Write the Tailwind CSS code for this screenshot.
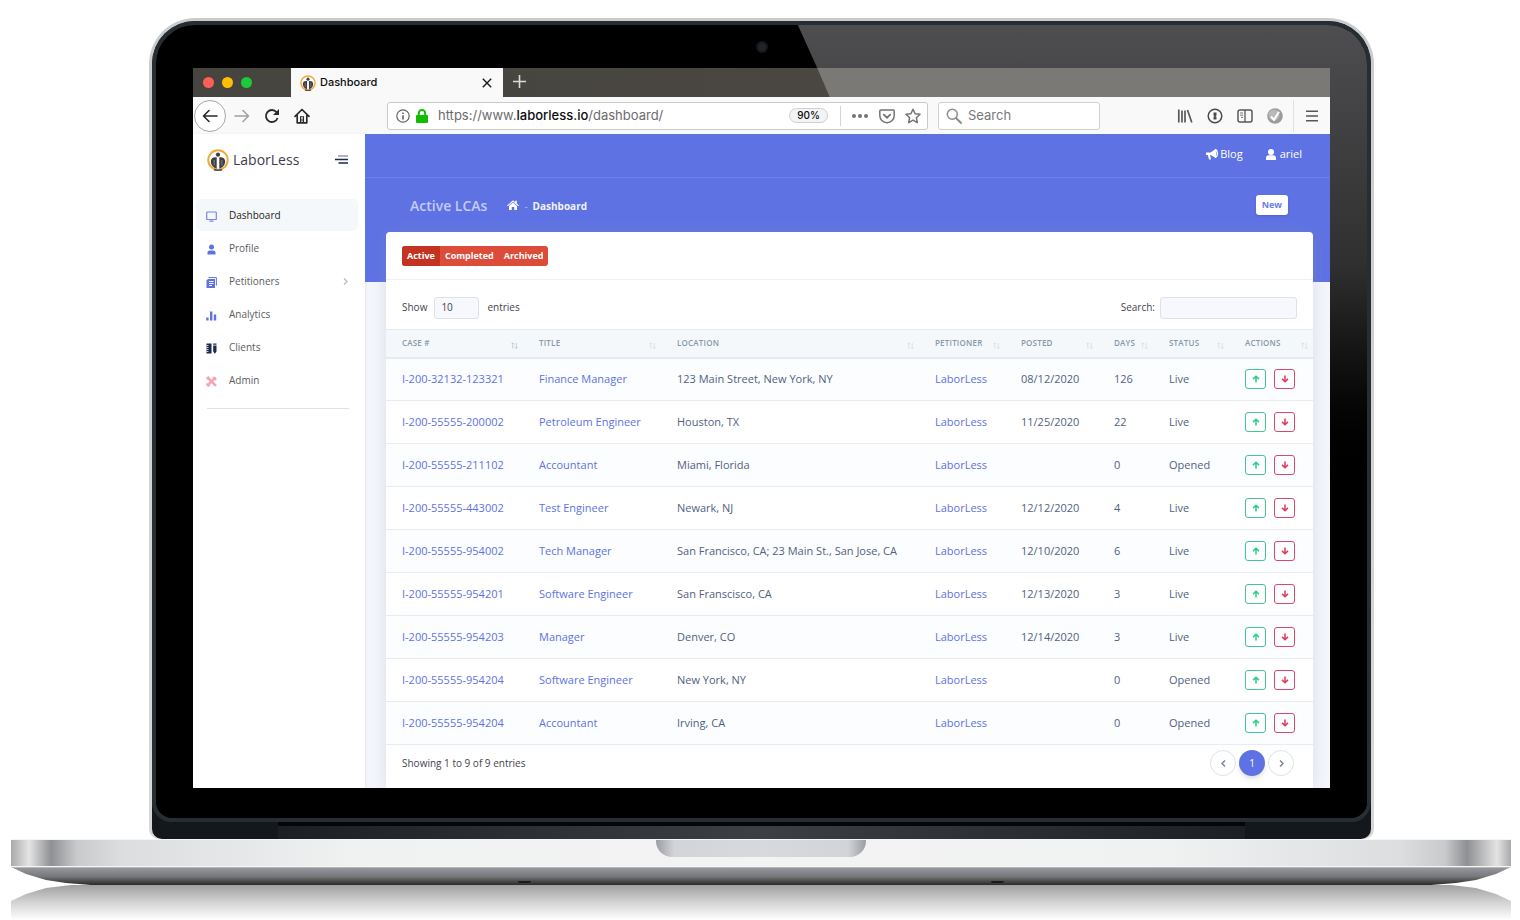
<!DOCTYPE html>
<html lang="en">
<head>
    <meta charset="UTF-8">
    <meta name="viewport" content="width=device-width, initial-scale=1.0">
    <title>LaborLess - Dashboard</title>
    <script src="https://cdn.jsdelivr.net/npm/@tailwindcss/browser@4"></script>
</head>
<body class="bg-white font-['Open_Sans','Liberation_Sans',sans-serif] overflow-x-hidden">

    <!-- Shared icons -->
    <svg class="hidden">
        <symbol id="logo" viewBox="0 0 24 24">
            <circle cx="12" cy="12" r="10.6" fill="#fff" stroke="#f2a93b" stroke-width="2.2"/>
            <circle cx="12" cy="6.2" r="2.3" fill="#3f3f42"/>
            <path d="M10.600 9v12.600C6.500 20.500 4 17 4.200 13.200 4.400 10 6.800 8.400 10.600 9zM13.400 9v12.600c4.100-1.100 6.600-4.600 6.400-8.400C19.600 10 17.200 8.400 13.400 9z" fill="#3f3f42"/>
            <path d="M7.800 12v6M16.200 12v6" stroke="#8b8b8d" stroke-width="1"/>
            <path d="M7.500 22.300c3 1.300 6 1.300 9 0" fill="none" stroke="#55534f" stroke-width="1.800"/>
        </symbol>
        <symbol id="arrow-up" viewBox="0 0 10 10">
            <path d="M5 9.500V1.800M1.300 5.200 5 1.500l3.700 3.700" fill="none" stroke="currentColor" stroke-width="1.900"/>
        </symbol>
        <symbol id="arrow-down" viewBox="0 0 10 10">
            <path d="M5 .5v7.700M1.300 4.800 5 8.500l3.700-3.700" fill="none" stroke="currentColor" stroke-width="1.900"/>
        </symbol>
        <symbol id="sort" viewBox="0 0 8 8">
            <path d="M2 7.500V1M.5 2.500 2 1l1.500 1.500M6 1v6.500M4.500 6 6 7.500 7.500 6" fill="none" stroke="currentColor" stroke-width=".7"/>
        </symbol>
    </svg>

    <div class="pt-[18px]">

        <!-- Laptop lid -->
        <div class="ml-[149px] mr-[146px] rounded-t-[46px] rounded-b-[10px] bg-linear-to-b from-[#c9cbcd] to-[#d6d7d9] px-[3px] pt-[3px]">
            <div class="rounded-t-[43px] rounded-b-[10px] bg-[#14181c] overflow-hidden">
                <div class="relative rounded-t-[43px] rounded-b-[20px] border-4 border-[#262e34] bg-black px-[37px] pt-[43px] pb-[30px] overflow-hidden">

                    <!-- Glare and camera -->
                    <div class="absolute inset-0 bg-linear-to-b from-[#4e4e50] via-[#303031] via-30% to-black to-60% [clip-path:polygon(53%_0,100%_0,100%_100%,80%_100%,54.6%_43px)]"></div>
                    <div class="absolute left-1/2 top-4 size-3 -translate-x-1/2 rounded-full border-2 border-[#15181b] bg-[#1f2428]"></div>

                    <!-- Screen -->
                    <div class="relative overflow-hidden bg-white">

                        <!-- Tabs -->
                        <div class="relative flex h-[29px] bg-linear-to-r from-[#45443f] to-[#4f4a46] font-[Inter,sans-serif]">
                            <div class="absolute inset-0 bg-[#7a7975] [clip-path:polygon(54.9%_0,100%_0,100%_100%,56%_100%)]"></div>
                            <div class="flex w-[98px] items-center gap-2 pl-[10px] pb-px">
                                <span class="size-[11px] rounded-full bg-[#ff5f57]"></span>
                                <span class="size-[11px] rounded-full bg-[#ffbd06]"></span>
                                <span class="size-[11px] rounded-full bg-[#1bcb38]"></span>
                            </div>
                            <div class="flex w-[212px] items-center bg-[#f9f9fa] pl-[9px] pr-[11px]">
                                <svg class="size-4"><use href="#logo"/></svg>
                                <span class="ml-1 text-[11px] font-medium text-[#0c0c0d]">Dashboard</span>
                                <button aria-label="Close tab" class="ml-auto">
                                    <svg class="size-[10px]" viewBox="0 0 10 10"><path d="M.8.800l8.400 8.400M9.200.8.800 9.200" stroke="#1c1c1d" stroke-width="1.400"/></svg>
                                </button>
                            </div>
                            <button aria-label="New tab" class="ml-[10px] pb-[2px]">
                                <svg class="size-[13px]" viewBox="0 0 13 13"><path d="M6.500 0v13M0 6.500h13" stroke="#dcdcda" stroke-width="1.600"/></svg>
                            </button>
                        </div>

                        <!-- Toolbar -->
                        <div class="flex h-[37px] items-center bg-[#f9f9fa] font-[Inter,sans-serif] text-[#38383d]">
                            <button aria-label="Back" class="ml-px flex size-8 items-center justify-center rounded-full border border-[#a8a8aa] bg-white">
                                <svg class="size-4" viewBox="0 0 16 16"><path d="M15 8H1.500M7 2.500L1.500 8 7 13.500" fill="none" stroke="#2a2a2e" stroke-width="1.600" stroke-linecap="round" stroke-linejoin="round"/></svg>
                            </button>
                            <button aria-label="Forward" class="ml-2">
                                <svg class="size-4" viewBox="0 0 16 16"><path d="M1 8h13.500M9 2.500L14.500 8 9 13.500" fill="none" stroke="#a0a0a3" stroke-width="1.500" stroke-linecap="round" stroke-linejoin="round"/></svg>
                            </button>
                            <button aria-label="Reload" class="ml-[14px]">
                                <svg class="size-4" viewBox="0 0 16 16"><path d="M13.600 10A6 6 0 1 1 12.600 4.200" fill="none" stroke="#2a2a2e" stroke-width="1.800"/><path d="M15 1v6H9z" fill="#2a2a2e"/></svg>
                            </button>
                            <button aria-label="Home" class="ml-[14px]">
                                <svg class="size-4" viewBox="0 0 16 16"><path d="M1 8.300 8 1.500l7 6.800M3.200 7v7.800h9.600V7" fill="none" stroke="#2a2a2e" stroke-width="1.700" stroke-linejoin="round" stroke-linecap="round"/><path d="M6.500 14.500V8.700h3v5.800M8 10.500v3" fill="none" stroke="#2a2a2e" stroke-width="1.100"/></svg>
                            </button>

                            <div class="ml-[77px] flex h-7 flex-1 items-center rounded-[3px] border border-[#c9c9cb] bg-white pl-2 pr-[6px]">
                                <svg class="size-[14px]" viewBox="0 0 14 14"><circle cx="7" cy="7" r="6.200" fill="none" stroke="#636367" stroke-width="1.200"/><path d="M7 6.200V10.500M7 3.500V5" stroke="#636367" stroke-width="1.600"/></svg>
                                <svg class="ml-[6px] h-[14px] w-3" viewBox="0 0 12 14"><rect y="6" width="12" height="8" rx="1" fill="#12bc00"/><path d="M2.800 7V4.200a3.200 3.200 0 0 1 6.400 0V7" fill="none" stroke="#12bc00" stroke-width="2"/></svg>
                                <span class="ml-[10px] pt-px text-[13px] text-[#6b6b6e]">https://www.<span class="font-medium text-[#0c0c0d]">laborless.io</span>/dashboard/</span>
                                <button class="ml-auto flex h-[15px] w-[39px] items-center justify-center rounded-full border border-[#cfcfd1] bg-[#f3f3f4] text-[10px] font-medium text-[#0c0c0d]">90%</button>
                                <span class="ml-3 h-5 w-px bg-[#d4d4d6]"></span>
                                <button aria-label="Page actions" class="ml-[11px] flex gap-[2px]">
                                    <span class="size-1 rounded-full bg-[#737377]"></span>
                                    <span class="size-1 rounded-full bg-[#737377]"></span>
                                    <span class="size-1 rounded-full bg-[#737377]"></span>
                                </button>
                                <button aria-label="Save to Pocket" class="ml-[11px]">
                                    <svg class="size-4" viewBox="0 0 16 16"><path d="M1.800 2h12.400c.6 0 1 .4 1 1v4.500a7.200 7.200 0 0 1-14.400 0V3c0-.6.4-1 1-1z" fill="none" stroke="#737377" stroke-width="1.500"/><path d="M4.800 6.600 8 9.700l3.200-3.100" fill="none" stroke="#737377" stroke-width="1.700" stroke-linecap="round"/></svg>
                                </button>
                                <button aria-label="Bookmark" class="ml-[10px]">
                                    <svg class="size-4" viewBox="0 0 16 16"><path d="M8 1.200l2.100 4.500 4.900.6-3.600 3.400.9 4.900L8 12.200l-4.300 2.400.9-4.900L1 6.300l4.900-.6z" fill="none" stroke="#737377" stroke-width="1.500" stroke-linejoin="round"/></svg>
                                </button>
                            </div>

                            <div class="ml-[10px] flex h-7 w-[162px] items-center rounded-[3px] border border-[#d0d0d2] bg-white pl-[7px]">
                                <svg class="size-4" viewBox="0 0 16 16"><circle cx="6.300" cy="6.300" r="5" fill="none" stroke="#8c8c90" stroke-width="1.500"/><path d="M10 10l5 5" stroke="#8c8c90" stroke-width="1.900" stroke-linecap="round"/></svg>
                                <input type="text" aria-label="Web search" placeholder="Search" class="ml-[6px] w-28 bg-transparent pt-px text-[13px] outline-none placeholder:text-[#77777b]">
                            </div>

                            <button aria-label="Library" class="ml-[77px]">
                                <svg class="size-4" viewBox="0 0 16 16"><path d="M1.800 1.500v13M5 2.500v12M8 2.500v12M10.500 2l4.300 12.500" fill="none" stroke="#58585c" stroke-width="1.700"/></svg>
                            </button>
                            <button aria-label="Password manager" class="ml-[14px]">
                                <svg class="size-4" viewBox="0 0 16 16"><circle cx="8" cy="8" r="6.800" fill="none" stroke="#4a4a4e" stroke-width="1.500"/><path d="M6.500 4.500h3v3l-1 .8 1 .7v2.500h-3V9l.9-.7-.9-.8z" fill="#4a4a4e"/></svg>
                            </button>
                            <button aria-label="Sidebars" class="ml-[14px]">
                                <svg class="size-4" viewBox="0 0 16 16"><rect x="1" y="2" width="14" height="12" rx="2" fill="none" stroke="#58585c" stroke-width="1.500"/><path d="M8 2v12" stroke="#58585c" stroke-width="1.300"/><path d="M3 5h3M3 7.200h3M4 9.400h2" stroke="#7a7a7d" stroke-width="1"/></svg>
                            </button>
                            <button aria-label="Extension" class="ml-[14px]">
                                <svg class="size-4" viewBox="0 0 16 16"><circle cx="8" cy="8" r="7.800" fill="#9b9b9d"/><circle cx="7" cy="7" r="5.500" fill="#b9b9bb"/><path d="M4 8.500l3 3.300 5-8" fill="none" stroke="#fff" stroke-width="2"/></svg>
                            </button>
                            <span class="ml-[10px] h-8 w-px bg-[#e2e2e4]"></span>
                            <button aria-label="Menu" class="ml-3 mr-3">
                                <svg class="size-[12px]" viewBox="0 0 12 12"><path d="M0 1.200h12M0 6h12M0 10.800h12" stroke="#58585c" stroke-width="1.500"/></svg>
                            </button>
                        </div>

                        <!-- App -->
                        <div class="flex bg-[#f4f6fb]">

                            <!-- Sidebar -->
                            <aside class="w-[172px] bg-white shadow-sm">
                                <div class="flex h-[50px] items-center pl-[14px] pr-[17px]">
                                    <svg class="mt-[2px] size-[22px]"><use href="#logo"/></svg>
                                    <span class="ml-1 text-[14px] text-[#3c3c50]">LaborLess</span>
                                    <button aria-label="Toggle sidebar" class="ml-auto">
                                        <svg class="h-[9px] w-[13px]" viewBox="0 0 13 9"><path d="M3 1h10" stroke="#5d6a80" stroke-width="1.200"/><path d="M0 4.500h13M3.500 8H13" stroke="#172b4d" stroke-width="1.500"/></svg>
                                    </button>
                                </div>
                                <nav class="mt-[15px] flex flex-col gap-px pl-[3px] pr-[7px] text-[10px] text-[#5c5c5f]">
                                    <a href="#" class="flex h-8 items-center rounded-[5px] bg-[#f5f8fb] px-[10px] text-[#1c1c1e]">
                                        <svg class="mt-[2px] mr-3 size-[11px]" viewBox="0 0 11 11"><rect x=".7" y="1" width="9.600" height="7.500" rx=".6" fill="none" stroke="#7b85e3" stroke-width="1.200"/><path d="M3.500 10.200h4" stroke="#7b85e3" stroke-width="1.200"/></svg>
                                        Dashboard
                                    </a>
                                    <a href="#" class="flex h-8 items-center px-[10px]">
                                        <svg class="mt-[2px] mr-3 size-[11px]" viewBox="0 0 11 11"><circle cx="5.500" cy="3" r="2.500" fill="#5e72e4"/><path d="M1.500 10.500V8.800c0-1.500 1-2.300 2.300-2.300h3.400c1.300 0 2.300.8 2.300 2.300v1.700z" fill="#5e72e4"/></svg>
                                        Profile
                                    </a>
                                    <a href="#" class="flex h-8 items-center px-[10px]">
                                        <svg class="mt-[2px] mr-3 size-[11px]" viewBox="0 0 11 11"><path d="M2.500.6h7.900v8" fill="none" stroke="#5e72e4" stroke-width="1"/><path d="M2 2h7v9H.5V3.500z" fill="#5e72e4"/><path d="M3 4.500h4.500M3 6.500h4.500M3 8.500h3" stroke="#fff" stroke-width=".9"/></svg>
                                        Petitioners
                                        <svg class="ml-auto h-[7px] w-[5px]" viewBox="0 0 5 7"><path d="M1 .5l3 3-3 3" fill="none" stroke="#b9bdc6" stroke-width="1.300"/></svg>
                                    </a>
                                    <a href="#" class="flex h-8 items-center px-[10px]">
                                        <svg class="mt-[2px] mr-3 size-[11px]" viewBox="0 0 11 11"><path d="M1.400 7.500v3M5.200 1.500v9M9 4.500v6" stroke="#5e72e4" stroke-width="2.400"/></svg>
                                        Analytics
                                    </a>
                                    <a href="#" class="flex h-8 items-center px-[10px]">
                                        <svg class="mt-[2px] mr-3 size-[11px]" viewBox="0 0 11 11"><path d="M.5.500h5v10h-5z" fill="#172b4d"/><path d="M.5 2.500h2M.5 4.500h2M.5 6.500h2M.5 8.500h2" stroke="#fff" stroke-width=".8"/><path d="M7.200 2.500h3.300v6L8.800 10.800 7.200 8.500zM7.200.5h3.300v1.300H7.200z" fill="#172b4d"/></svg>
                                        Clients
                                    </a>
                                    <a href="#" class="flex h-8 items-center px-[10px]">
                                        <svg class="mt-[2px] mr-3 size-[11px]" viewBox="0 0 11 11"><path d="M1.800 9.200l7-7M2.200 2.200l7 7" stroke="#f3a4b5" stroke-width="2.600" stroke-linecap="round"/><path d="M.5 3l2.500-2.500M7.300.8l.7 2.200 2.500.6M.6 7.600l2.800 2.800" stroke="#f3a4b5" stroke-width="1.800" fill="none"/></svg>
                                        Admin
                                    </a>
                                </nav>
                                <hr class="mt-3 ml-[14px] mr-4 border-[#dfe1e6]">
                            </aside>

                            <!-- Main -->
                            <main class="min-w-0 flex-1">
                                <div class="bg-[#5e72e4] pb-[50px] text-white">
                                    <div class="flex h-11 items-center justify-end border-b border-[#6d80e8] pr-7 pb-[2px] text-[11px]">
                                        <a href="#" class="flex items-center gap-[2px]">
                                            <svg class="h-[11px] w-3" viewBox="0 0 12 11"><path d="M0 3.500h4.500L9 .5v8L4.500 6H4l1 4.500H3L1.800 6H0z" fill="#fff"/><path d="M9.500.6c2.500 1 2.500 7 0 7.800z" fill="none" stroke="#fff" stroke-width="1.200"/></svg>
                                            Blog
                                        </a>
                                        <a href="#" class="ml-[23px] flex items-center gap-1">
                                            <svg class="h-[11px] w-[10px]" viewBox="0 0 10 11"><circle cx="5" cy="3" r="3" fill="#fff"/><path d="M0 11V9c0-1.700 1.200-2.700 2.800-2.700h4.400C8.800 6.300 10 7.300 10 9v2z" fill="#fff"/></svg>
                                            ariel
                                        </a>
                                    </div>
                                    <div class="flex h-[54px] items-center pl-[45px] pr-[42px]">
                                        <h1 class="text-[14px] font-semibold text-[#c3cbf6]">Active LCAs</h1>
                                        <a href="#" aria-label="Home" class="ml-5">
                                            <svg class="h-[10px] w-3" viewBox="0 0 12 10"><path d="M0 5.500 6 .3l2.200 1.900V.8h1.600v2.800L12 5.500l-.7.8L6 1.800.7 6.300z" fill="#fff"/><path d="M2 6l4-3.400L10 6v4H7.200V7H4.800v3H2z" fill="#fff"/></svg>
                                        </a>
                                        <span class="ml-[5px] pt-[2px] text-[10px] text-[#aab5f1]">-</span>
                                        <span class="ml-[5px] pt-[2px] text-[10px] font-bold text-[#f1f3fd]">Dashboard</span>
                                        <a href="#" class="ml-auto rounded-[3px] bg-white px-[6px] py-[3px] text-[9px] leading-[14px] font-bold text-[#6b7de6] shadow">New</a>
                                    </div>
                                </div>

                                <!-- LCA card -->
                                <section class="ml-[21px] mr-[17px] -mt-[50px] rounded-t-[4px] bg-white pb-3 shadow-[0_0_16px_rgba(136,152,170,0.25)]">
                                    <div class="flex h-12 items-center border-b border-[#eef0f4] px-4">
                                        <div class="flex overflow-hidden rounded-[3px] bg-[#dd4b39] text-[9px] leading-5 font-bold text-white">
                                            <button class="bg-[#c23321] px-[5px]">Active</button>
                                            <button class="px-[5px]">Completed</button>
                                            <button class="px-[5px]">Archived</button>
                                        </div>
                                    </div>

                                    <div class="flex h-[49px] items-center px-4 pt-[6px] text-[10px] text-[#3f4450]">
                                        <label for="length">Show</label>
                                        <select id="length" class="ml-[7px] mr-2 h-[22px] w-[45px] appearance-none rounded-[3px] border border-[#dee2e6] bg-[#f7f8fd] pl-[6px]">
                                            <option>10</option>
                                            <option>25</option>
                                            <option>50</option>
                                        </select>
                                        <span>entries</span>
                                        <label for="search" class="ml-auto">Search:</label>
                                        <input id="search" type="search" class="ml-[5px] h-[22px] w-[137px] rounded-[3px] border border-[#dee2e6] bg-[#f7f8fd] px-2">
                                    </div>

                                    <table class="w-full table-fixed text-left text-[11px] text-[#525f7f]">
                                        <thead class="bg-[#f4f8fb] text-[8px] tracking-wide text-[#8898aa] uppercase">
                                            <tr class="h-7 border-t border-b-2 border-[#e6eaef]">
                                                <th class="relative w-[137px] pl-4 font-semibold">Case #<svg class="absolute right-[5px] bottom-2 size-[7px] text-[#a8b2bf]"><use href="#sort"/></svg></th>
                                                <th class="relative w-[138px] pl-4 font-semibold">Title<svg class="absolute right-[5px] bottom-2 size-[7px] text-[#cdd4dc]"><use href="#sort"/></svg></th>
                                                <th class="relative w-[258px] pl-4 font-semibold">Location<svg class="absolute right-[5px] bottom-2 size-[7px] text-[#cdd4dc]"><use href="#sort"/></svg></th>
                                                <th class="relative w-[86px] pl-4 font-semibold">Petitioner<svg class="absolute right-[5px] bottom-2 size-[7px] text-[#cdd4dc]"><use href="#sort"/></svg></th>
                                                <th class="relative w-[93px] pl-4 font-semibold">Posted<svg class="absolute right-[5px] bottom-2 size-[7px] text-[#cdd4dc]"><use href="#sort"/></svg></th>
                                                <th class="relative w-[55px] pl-4 font-semibold">Days<svg class="absolute right-[5px] bottom-2 size-[7px] text-[#cdd4dc]"><use href="#sort"/></svg></th>
                                                <th class="relative w-[76px] pl-4 font-semibold">Status<svg class="absolute right-[5px] bottom-2 size-[7px] text-[#cdd4dc]"><use href="#sort"/></svg></th>
                                                <th class="relative w-[84px] pl-4 font-semibold">Actions<svg class="absolute right-[5px] bottom-2 size-[7px] text-[#cdd4dc]"><use href="#sort"/></svg></th>
                                            </tr>
                                        </thead>
                                        <tbody id="rows"></tbody>
                                    </table>

                                    <div class="flex items-center justify-between pt-[5px] pl-4 pr-[19px] text-[10px] text-[#3f4450]">
                                        <p>Showing 1 to 9 of 9 entries</p>
                                        <div class="flex gap-[3px]">
                                            <button aria-label="Previous" class="flex size-[26px] items-center justify-center rounded-full border border-[#dee2e6] text-[#76859a]">
                                                <svg class="h-[7px] w-[5px]" viewBox="0 0 5 7"><path d="M4 .5l-3 3 3 3" fill="none" stroke="currentColor" stroke-width="1.500"/></svg>
                                            </button>
                                            <button class="size-[26px] rounded-full bg-[#5e72e4] text-white shadow-md">1</button>
                                            <button aria-label="Next" class="flex size-[26px] items-center justify-center rounded-full border border-[#dee2e6] text-[#76859a]">
                                                <svg class="h-[7px] w-[5px]" viewBox="0 0 5 7"><path d="M1 .5l3 3-3 3" fill="none" stroke="currentColor" stroke-width="1.500"/></svg>
                                            </button>
                                        </div>
                                    </div>
                                </section>
                            </main>
                        </div>
                    </div>
                </div>

                <!-- Hinge -->
                <div class="px-[126px]">
                    <div class="h-[17px] border-t-4 border-[#050607] bg-linear-to-r from-[#1c2024] via-[#3c4045] to-[#1c2024]"></div>
                </div>
            </div>
        </div>

        <!-- Laptop base -->
        <div class="ml-[11px] mr-[9px]">
            <div class="h-7 border-y border-[#f5f5f5] bg-[linear-gradient(to_right,#a9a9ab_0,#e4e4e5_18px,#8f9093_40px,#c9cacc_66px,#dcdddf_110px,#f0f1f1_340px,#f3f3f3_50%,#f0f1f1_calc(100%-340px),#dcdddf_calc(100%-110px),#c9cacc_calc(100%-66px),#8f9093_calc(100%-44px),#e4e4e5_calc(100%-14px),#a9a9ab_100%)]">
                <div class="mx-auto h-[17px] w-[210px] rounded-b-[16px] bg-[linear-gradient(to_right,#9c9da0_0,#d3d4d7_18px,#d8d9dc_50%,#d3d4d7_calc(100%-18px),#9c9da0_100%)]"></div>
            </div>
            <div class="flex h-[18px] items-end justify-between border-t border-[#b5b6b9] bg-linear-to-b from-[#96979c] via-[#76777b] to-[#2b2b2d] px-[507px] [clip-path:polygon(0_0,100%_0,calc(100%-15px)_7px,calc(100%-35px)_13px,calc(100%-55px)_16px,calc(100%-80px)_18px,80px_18px,55px_16px,35px_13px,15px_7px)]">
                <span class="mb-[2px] h-[2px] w-[13px] rounded-b-full bg-[#1a1a1b]"></span>
                <span class="mb-[2px] h-[2px] w-[13px] rounded-b-full bg-[#1a1a1b]"></span>
            </div>
            <div class="h-[35px] bg-linear-to-b from-[#a0a0a0] via-[#d4d4d4] via-50% to-white [clip-path:polygon(0_16px,15px_9px,35px_3px,60px_0,calc(100%-60px)_0,calc(100%-35px)_3px,calc(100%-15px)_9px,100%_16px,100%_100%,0_100%)]"></div>
        </div>
    </div>

    <script>
        // case number, title, location, posted, days, status
        const cases = [
            ['I-200-32132-123321', 'Finance Manager', '123 Main Street, New York, NY', '08/12/2020', 126, 'Live'],
            ['I-200-55555-200002', 'Petroleum Engineer', 'Houston, TX', '11/25/2020', 22, 'Live'],
            ['I-200-55555-211102', 'Accountant', 'Miami, Florida', '', 0, 'Opened'],
            ['I-200-55555-443002', 'Test Engineer', 'Newark, NJ', '12/12/2020', 4, 'Live'],
            ['I-200-55555-954002', 'Tech Manager', 'San Francisco, CA; 23 Main St., San Jose, CA', '12/10/2020', 6, 'Live'],
            ['I-200-55555-954201', 'Software Engineer', 'San Franscisco, CA', '12/13/2020', 3, 'Live'],
            ['I-200-55555-954203', 'Manager', 'Denver, CO', '12/14/2020', 3, 'Live'],
            ['I-200-55555-954204', 'Software Engineer', 'New York, NY', '', 0, 'Opened'],
            ['I-200-55555-954204', 'Accountant', 'Irving, CA', '', 0, 'Opened']
        ];

        document.getElementById('rows').innerHTML = cases.map(([id, title, location, posted, days, status]) => `
            <tr class="h-[43px] border-b border-[#e9ecef] whitespace-nowrap odd:bg-[#fbfdff]">
                <td class="pl-4"><a href="#" class="text-[#5e72e4]">${id}</a></td>
                <td class="pl-4"><a href="#" class="text-[#5e72e4]">${title}</a></td>
                <td class="pl-4">${location}</td>
                <td class="pl-4"><a href="#" class="text-[#5e72e4]">LaborLess</a></td>
                <td class="pl-4">${posted}</td>
                <td class="pl-4">${days}</td>
                <td class="pl-4">${status}</td>
                <td class="pl-4">
                    <div class="flex gap-2">
                        <button aria-label="Move up" class="flex h-5 w-[21px] items-center justify-center rounded-[3px] border border-[#45c496] text-[#2dce89]"><svg class="size-2"><use href="#arrow-up"/></svg></button>
                        <button aria-label="Move down" class="flex h-5 w-[21px] items-center justify-center rounded-[3px] border border-[#d8496b] text-[#e3395c]"><svg class="size-2"><use href="#arrow-down"/></svg></button>
                    </div>
                </td>
            </tr>`).join('');
    </script>
</body>
</html>
